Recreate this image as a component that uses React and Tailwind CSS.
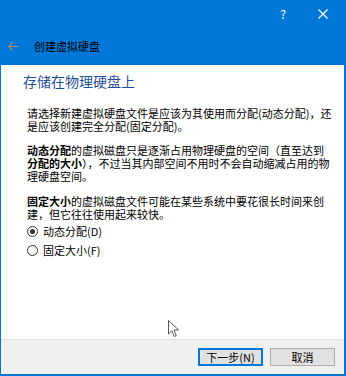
import React from 'react';

const font = { fontFamily: '"Noto Sans CJK SC", "Noto Sans", sans-serif' };

const Radio = ({ checked, label }) => (
  <div className="flex items-center h-[18px]">
    <span className="w-[11px] h-[11px] rounded-full border border-[#333] bg-white flex items-center justify-center">
      {checked && <span className="w-[5px] h-[5px] rounded-full bg-[#333]" />}
    </span>
    <span className="ml-[5px] text-[11px] leading-[13px] text-black">{label}</span>
  </div>
);

export default function App() {
  return (
    <div className="relative w-[346px] h-[376px] bg-[#0078d7] flex flex-col overflow-hidden" style={font}>
      {/* title bar */}
      <div className="h-[27px] flex justify-end items-center pr-[3px] text-white">
        <div className="w-[40px] flex justify-center text-[12px]">?</div>
        <div className="w-[40px] flex justify-center">
          <svg width="10" height="10" viewBox="0 0 10 10">
            <path d="M0.5 0.5 L9.5 9.5 M9.5 0.5 L0.5 9.5" stroke="white" strokeWidth="1.1" />
          </svg>
        </div>
      </div>

      {/* wizard header */}
      <div className="h-[38px] flex items-center">
        <svg className="ml-[8px]" width="11" height="9" viewBox="0 0 11 9">
          <path d="M4.5 0.5 L0.8 4.5 L4.5 8.5 M0.8 4.5 L10.5 4.5" stroke="#a88c72" strokeWidth="1.2" fill="none" />
        </svg>
        <span className="ml-[15px] text-[11px] text-black">创建虚拟硬盘</span>
      </div>

      {/* body */}
      <div className="flex-1 ml-[1px] mr-[2px] mb-[2px] bg-white flex flex-col">
        <div className="flex-1 pt-[8px]">
          <h1 className="pl-[22px] text-[14px] leading-[16px] text-[#1f4e9c]">存储在物理硬盘上</h1>

          <div className="pl-[26px] mt-[18px] text-[11px] leading-[13px] text-black whitespace-nowrap">
            <p>请选择新建虚拟硬盘文件是应该为其使用而分配(动态分配)，还</p>
            <p>是应该创建完全分配(固定分配)。</p>

            <div className="mt-[11px]">
              <p><b>动态分配</b>的虚拟磁盘只是逐渐占用物理硬盘的空间（直至达到</p>
              <p><b>分配的大小</b>），不过当其内部空间不用时不会自动缩减占用的物</p>
              <p>理硬盘空间。</p>
            </div>

            <div className="mt-[12px]">
              <p><b>固定大小</b>的虚拟磁盘文件可能在某些系统中要花很长时间来创</p>
              <p>建，但它往往使用起来较快。</p>
            </div>

            <div className="mt-[1px] flex flex-col gap-[1px]">
              <Radio checked label="动态分配(D)" />
              <Radio label="固定大小(F)" />
            </div>
          </div>
        </div>

        {/* footer */}
        <div className="h-[35px] border-t border-[#dfdfdf] bg-[#f0f0f0] flex justify-end items-start pt-[8px] pr-[9px] gap-[7px]">
          <button className="w-[65px] h-[18px] border-2 border-[#0078d7] bg-[#e1e1e1] text-[11px] leading-none text-black">
            下一步(N)
          </button>
          <button className="w-[65px] h-[18px] border border-[#adadad] bg-[#e1e1e1] text-[11px] leading-none text-black">
            取消
          </button>
        </div>
      </div>

      {/* mouse pointer */}
      <svg className="absolute left-[168px] top-[320px]" width="13" height="18" viewBox="0 0 13 18">
        <path d="M0.5 0.5 L0.5 14 L3.8 10.8 L6.3 16.5 L8.3 15.6 L5.9 10 L10.5 10 Z" fill="white" stroke="#555" strokeWidth="1" strokeLinejoin="round" />
      </svg>
    </div>
  );
}
